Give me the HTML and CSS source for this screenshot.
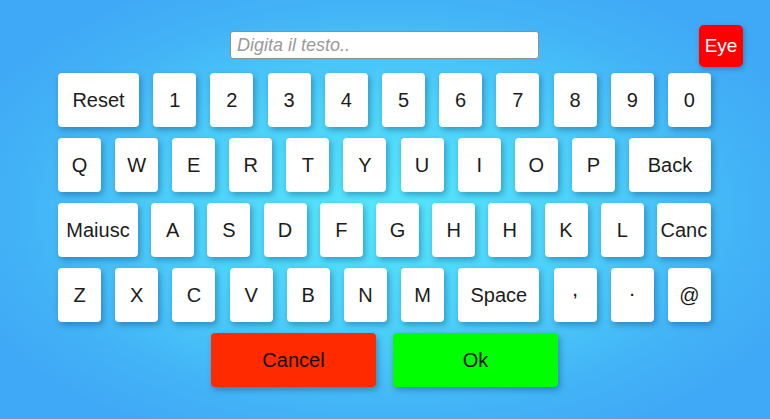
FILE: index.html
```html
<!DOCTYPE html>
<html lang="it">
<head>
<meta charset="utf-8">
<title>Tastiera</title>
<link rel="stylesheet" href="styles.css">
</head>
<body>
<div class="screen">
  <div class="top">
    <input class="field" type="text" placeholder="Digita il testo..">
    <button class="eye">Eye</button>
  </div>
  <div class="keyboard">
    <div class="row">
      <button class="key wide">Reset</button>
      <button class="key">1</button><button class="key">2</button><button class="key">3</button><button class="key">4</button><button class="key">5</button><button class="key">6</button><button class="key">7</button><button class="key">8</button><button class="key">9</button><button class="key">0</button>
    </div>
    <div class="row">
      <button class="key">Q</button><button class="key">W</button><button class="key">E</button><button class="key">R</button><button class="key">T</button><button class="key">Y</button><button class="key">U</button><button class="key">I</button><button class="key">O</button><button class="key">P</button>
      <button class="key wide back">Back</button>
    </div>
    <div class="row">
      <button class="key wide maiusc">Maiusc</button>
      <button class="key">A</button><button class="key">S</button><button class="key">D</button><button class="key">F</button><button class="key">G</button><button class="key">H</button><button class="key">H</button><button class="key">K</button><button class="key">L</button>
      <button class="key canc">Canc</button>
    </div>
    <div class="row">
      <button class="key">Z</button><button class="key">X</button><button class="key">C</button><button class="key">V</button><button class="key">B</button><button class="key">N</button><button class="key">M</button>
      <button class="key wide">Space</button>
      <button class="key small">,</button><button class="key small">.</button><button class="key">@</button>
    </div>
  </div>
  <div class="actions">
    <button class="action cancel">Cancel</button>
    <button class="action ok">Ok</button>
  </div>
</div>
</body>
</html>
```

FILE: styles.css
```css
* { box-sizing: border-box; }
html, body {
  margin: 0;
  padding: 0;
  width: 770px;
  height: 419px;
  overflow: hidden;
}
body {
  font-family: "Liberation Sans", Arial, sans-serif;
  background: radial-gradient(ellipse 60% 62% at 50% 50%, #55e8fc 0%, #4cd0fa 45%, #42b2f6 80%, #3fa8f7 100%);
}
.screen {
  width: 770px;
  height: 419px;
  padding-top: 25px;
  display: flex;
  flex-direction: column;
  align-items: center;
}
.top {
  width: 770px;
  height: 42px;
  position: relative;
  display: flex;
  justify-content: center;
}
.field {
  margin-top: 6px;
  margin-left: -1px;
  width: 309px;
  height: 28px;
  border: 1px solid #8f8f8f;
  border-radius: 3px;
  background: #fff;
  padding: 0 6px;
  font-family: "Liberation Sans", Arial, sans-serif;
  font-size: 18px;
  font-style: italic;
  color: #333;
}
.field::placeholder {
  color: #9a9a9a;
  font-style: italic;
}
.eye {
  position: absolute;
  left: 699px;
  top: 0;
  width: 44px;
  height: 42px;
  border: none;
  border-radius: 5px;
  background: #ff0000;
  color: #fff;
  font-family: "Liberation Sans", Arial, sans-serif;
  font-size: 19px;
  padding: 0;
  box-shadow: 1px 2px 5px rgba(0, 0, 0, 0.25);
}
.keyboard {
  margin-top: 6px;
  margin-right: 1px;
  width: 653px;
  display: flex;
  flex-direction: column;
  gap: 11px;
}
.row {
  display: flex;
  justify-content: space-between;
}
.key {
  width: 43px;
  height: 54px;
  border: none;
  border-radius: 4px;
  background: #fff;
  color: #1c1c1c;
  font-family: "Liberation Sans", Arial, sans-serif;
  font-size: 20px;
  padding: 0;
  box-shadow: 2px 3px 6px rgba(0, 40, 90, 0.35);
}
.key.wide { width: 81px; }
.key.back { width: 82px; }
.key.maiusc { width: 80px; }
.key.canc { width: 54px; }
.key.small {
  font-size: 15px;
  font-weight: bold;
  padding-bottom: 9px;
}
.actions {
  margin-top: 11px;
  margin-right: 1px;
  display: flex;
  gap: 17px;
}
.action {
  width: 165px;
  height: 54px;
  border: none;
  border-radius: 4px;
  color: #111;
  font-family: "Liberation Sans", Arial, sans-serif;
  font-size: 20px;
  padding: 0;
  box-shadow: 2px 3px 6px rgba(0, 40, 90, 0.35);
}
.cancel { background: #ff2a00; }
.ok { background: #00ff00; }
```
